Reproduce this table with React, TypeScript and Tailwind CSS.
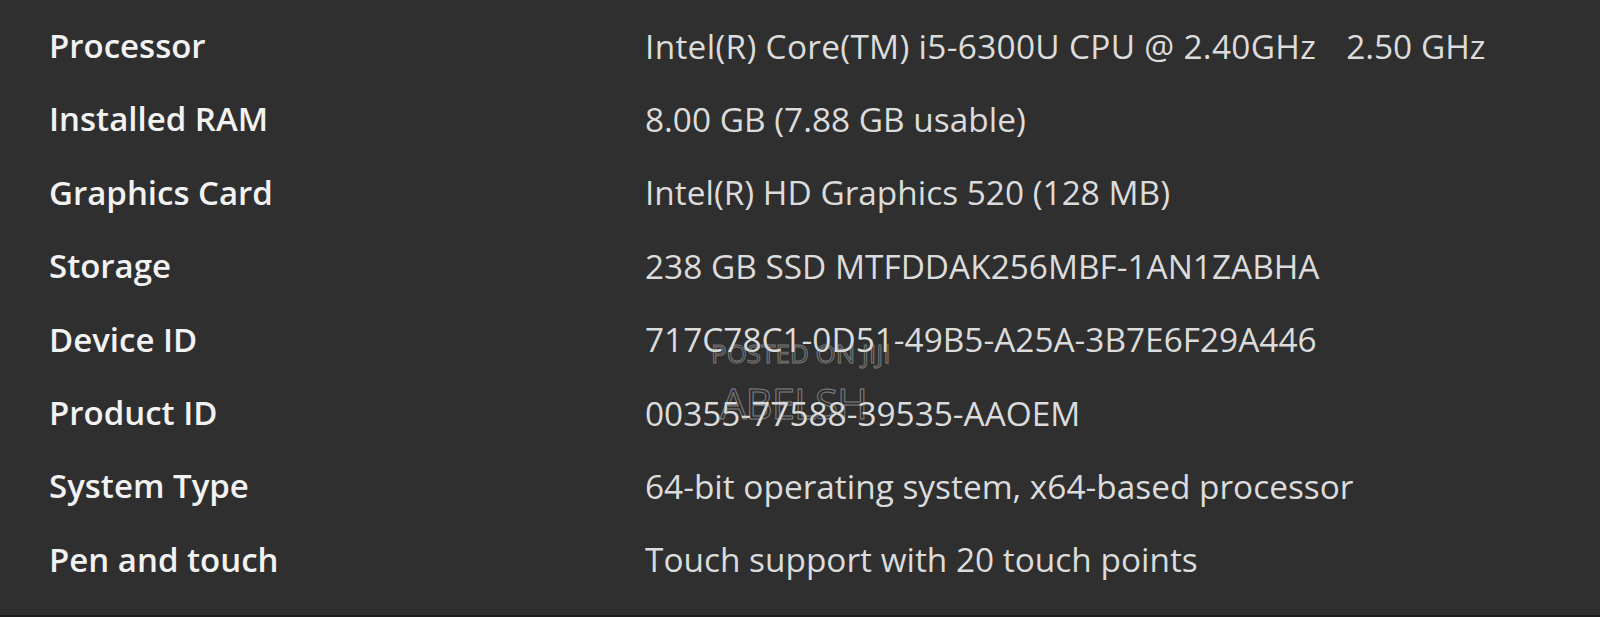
import React from "react";

const rows: [string, React.ReactNode][] = [
  [
    "Processor",
    <>
      <span className="tracking-[0.3px]">Intel(R) Core(TM) i5-6300U CPU @ 2.40GHz</span>
      <span className="ml-[30px]">2.50 GHz</span>
    </>,
  ],
  ["Installed RAM", "8.00 GB (7.88 GB usable)"],
  ["Graphics Card", "Intel(R) HD Graphics 520 (128 MB)"],
  ["Storage", "238 GB SSD MTFDDAK256MBF-1AN1ZABHA"],
  ["Device ID", "717C78C1-0D51-49B5-A25A-3B7E6F29A446"],
  ["Product ID", "00355-77588-39535-AAOEM"],
  ["System Type", "64-bit operating system, x64-based processor"],
  ["Pen and touch", "Touch support with 20 touch points"],
];

export default function App() {
  return (
    <div
      className="relative w-[1600px] h-[617px] bg-[#2f2f2f] overflow-hidden border-b-2 border-[#1e1e1e]"
      style={{ fontFamily: '"Open Sans", "Noto Sans", sans-serif' }}
    >
      <div className="flex flex-col pt-[9px]">
        {rows.map(([k, v]) => (
          <div key={k} className="flex h-[73.4px] items-center">
            <div className="w-[645px] shrink-0 pl-[49px] text-[33px] font-semibold text-[#f2f2f2]">{k}</div>
            <div className="text-[33.4px] whitespace-nowrap text-[#dcdcdc]">{v}</div>
          </div>
        ))}
      </div>
      <div
        className="absolute left-[711px] top-[340px] text-[26px] leading-none text-transparent"
        style={{ WebkitTextStroke: "1px rgba(200,200,200,0.5)" }}
      >
        POSTED ON JIJI
      </div>
      <div
        className="absolute left-[720px] top-[382px] text-[42px] leading-none tracking-[-1px] text-transparent"
        style={{ WebkitTextStroke: "1px rgba(200,200,200,0.55)" }}
      >
        ABELSH
      </div>
    </div>
  );
}
